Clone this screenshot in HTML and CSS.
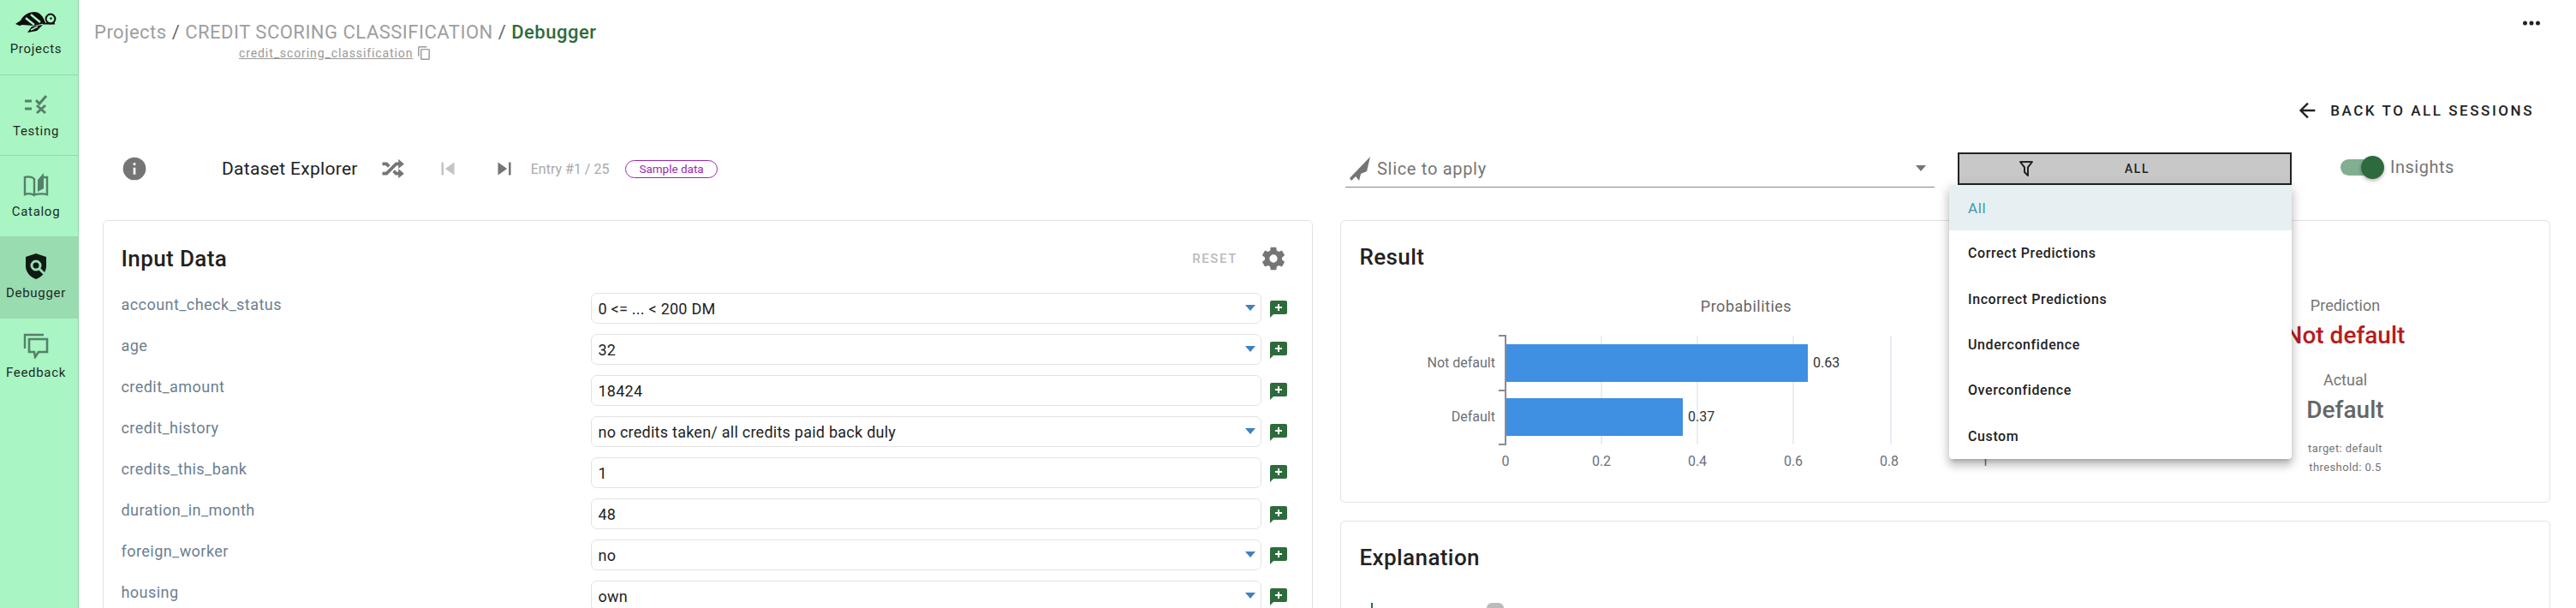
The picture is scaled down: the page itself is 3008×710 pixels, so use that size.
FILE: index.html
```html
<!DOCTYPE html>
<html lang="en">
<head>
  <meta charset="UTF-8">
  <title>Debugger</title>
  <link rel="stylesheet" href="styles.css">
</head>
<body>
  <svg class="sprite" width="0" height="0">
    <symbol id="add" viewBox="0 0 24 24"><path d="M20,2H4A2,2 0 0,0 2,4V22L6,18H20A2,2 0 0,0 22,16V4A2,2 0 0,0 20,2M11,6H13V9H16V11H13V14H11V11H8V9H11V6Z"/></symbol>
    <symbol id="caret" viewBox="0 0 12 7"><path d="M0,0H12L6,7Z"/></symbol>
  </svg>

  <nav class="sidebar">
    <a class="nav-item nav-first">
      <svg class="nav-icon" width="48" height="30" viewBox="0 0 48 30">
        <path d="M0,17L6,13C9,7 15,3 22,3C29,3 33,9 35,16L22,19L8,18L5,19Z" fill="#0d0d0d"/>
        <path d="M12,10L22,18M18,6L29,15" stroke="#a9f5c3" stroke-width="2.4"/>
        <circle cx="41" cy="11" r="5.4" fill="none" stroke="#0d0d0d" stroke-width="2"/>
        <circle cx="41.5" cy="10.5" r="1.2" fill="#0d0d0d"/>
        <path d="M32,16.5H46" stroke="#0d0d0d" stroke-width="2"/>
        <path d="M14,27L19,20L32,18L25,25Z" fill="#0d0d0d"/>
        <path d="M18,24L26,20" stroke="#a9f5c3" stroke-width="1.4"/>
      </svg>
      <span>Projects</span>
    </a>
    <a class="nav-item">
      <svg class="nav-icon" width="30" height="30" viewBox="0 0 30 30">
        <path d="M2,11H10M2,20H10" stroke="#55806a" stroke-width="3"/>
        <path d="M15,10L19,14L27,5M16,16L26,25M26,16L16,25" fill="none" stroke="#55806a" stroke-width="3"/>
      </svg>
      <span>Testing</span>
    </a>
    <a class="nav-item">
      <svg class="nav-icon" width="30" height="30" viewBox="0 0 30 30">
        <path d="M13,27V8C10,5 5,5 2,6V26C5,25 10,25 13,27C15,25 25,25 28,26V6H24" fill="none" stroke="#55806a" stroke-width="2.4"/>
        <path d="M17,23V9L24,1V19Z" fill="#55806a"/>
      </svg>
      <span>Catalog</span>
    </a>
    <a class="nav-item active">
      <svg class="nav-icon" width="30" height="30" viewBox="0 0 30 30">
        <path d="M15,0L27,4V15C27,22 21,28 15,30C9,28 3,22 3,15V4Z" fill="#101a14"/>
        <circle cx="15" cy="14" r="5" fill="none" stroke="#98dcb0" stroke-width="3"/>
        <path d="M19,18L25,24" stroke="#98dcb0" stroke-width="3"/>
      </svg>
      <span>Debugger</span>
    </a>
    <a class="nav-item">
      <svg class="nav-icon" width="30" height="30" viewBox="0 0 30 30">
        <path d="M24,2H2V18" fill="none" stroke="#55806a" stroke-width="2.4"/>
        <path d="M7,7H28V22H18L14,28L13,22H7Z" fill="none" stroke="#55806a" stroke-width="2.6"/>
      </svg>
      <span>Feedback</span>
    </a>
  </nav>

  <main class="main">
    <header class="top">
      <div class="crumbs">
        <div class="crumb-line">
          <span class="crumb">Projects</span> / <span class="crumb">CREDIT SCORING CLASSIFICATION</span> / <span class="crumb-now">Debugger</span>
        </div>
        <div class="crumb-sub">
          <span class="crumb-key">credit_scoring_classification</span>
          <svg width="14" height="16" viewBox="2 1 19 22" fill="#999"><path d="M19,21H8V7H19M19,5H8A2,2 0 0,0 6,7V21A2,2 0 0,0 8,23H19A2,2 0 0,0 21,21V7A2,2 0 0,0 19,5M16,1H4A2,2 0 0,0 2,3V17H4V3H16V1Z"/></svg>
        </div>
      </div>
      <svg class="dots" width="30" height="30" viewBox="0 0 24 24" fill="#222"><path d="M16,12A2,2 0 0,1 18,10A2,2 0 0,1 20,12A2,2 0 0,1 18,14A2,2 0 0,1 16,12M10,12A2,2 0 0,1 12,10A2,2 0 0,1 14,12A2,2 0 0,1 12,14A2,2 0 0,1 10,12M4,12A2,2 0 0,1 6,10A2,2 0 0,1 8,12A2,2 0 0,1 6,14A2,2 0 0,1 4,12Z"/></svg>
    </header>

    <div class="back-row">
      <svg width="28" height="28" viewBox="0 0 24 24" fill="#222"><path d="M20,11V13H8L13.5,18.5L12.08,19.92L4.16,12L12.08,4.08L13.5,5.5L8,11H20Z"/></svg>
      <span class="back-label">BACK TO ALL SESSIONS</span>
    </div>

    <section class="columns">
      <div class="toolbar">
        <svg class="info-icon" width="32" height="32" viewBox="0 0 24 24" fill="#757575"><path d="M13,9H11V7H13M13,17H11V11H13M12,2A10,10 0 0,0 2,12A10,10 0 0,0 12,22A10,10 0 0,0 22,12A10,10 0 0,0 12,2Z"/></svg>
        <span class="explorer">Dataset Explorer</span>
        <svg class="shuffle" width="30" height="30" viewBox="0 0 24 24" fill="#757575"><path d="M17,3L22.25,7.5L17,12L22.25,16.5L17,21V18H14.26L11.44,15.18L13.56,13.06L15.5,15H17V12L17,9H15.5L6.5,18H2V15H5.26L14.26,6H17V3M2,6H6.5L9.32,8.82L7.2,10.94L5.26,9H2V6Z"/></svg>
        <svg class="prev" width="30" height="30" viewBox="0 0 24 24" fill="#c4c4c4"><path d="M6,18V6H8V18H6M9.5,12L18,6V18L9.5,12Z"/></svg>
        <svg class="next" width="30" height="30" viewBox="0 0 24 24" fill="#757575"><path d="M16,18H18V6H16M6,18L14.5,12L6,6V18Z"/></svg>
        <span class="entry">Entry #1 / 25</span>
        <span class="chip">Sample data</span>
      </div>

      <div class="toolbar toolbar-right">
        <div class="slice">
          <svg width="26" height="28" viewBox="0 0 26 28" fill="#757575"><path d="M25,0L21,17L14,20L12,28L8,23L3,28L1,25Z"/></svg>
          <span class="slice-label">Slice to apply</span>
          <svg class="slice-caret" width="12" height="7"><use href="#caret"/></svg>
        </div>
        <div class="filter">
          <button class="filter-btn">
            <svg class="filter-icon" width="24" height="24" viewBox="0 0 24 24" fill="#222"><path d="M15,19.88C15.04,20.18 14.94,20.5 14.71,20.71C14.32,21.1 13.69,21.1 13.3,20.71L9.29,16.7C9.06,16.47 8.96,16.16 9,15.87V10.75L4.21,4.62C3.87,4.19 3.95,3.56 4.38,3.22C4.57,3.08 4.78,3 5,3V3H19V3C19.22,3 19.43,3.08 19.62,3.22C20.05,3.56 20.13,4.19 19.79,4.62L15,10.75V19.88M7.04,5L11,10.06V15.58L13,17.58V10.05L16.96,5H7.04Z"/></svg>
            <span class="filter-label">ALL</span>
          </button>
          <ul class="menu">
            <li class="menu-item selected">All</li>
            <li class="menu-item">Correct Predictions</li>
            <li class="menu-item">Incorrect Predictions</li>
            <li class="menu-item">Underconfidence</li>
            <li class="menu-item">Overconfidence</li>
            <li class="menu-item">Custom</li>
          </ul>
        </div>
        <div class="switch">
          <span class="switch-track"></span>
          <span class="switch-thumb"></span>
        </div>
        <span class="switch-label">Insights</span>
      </div>

      <div class="card">
        <div class="card-head">
          <h2 class="card-title">Input Data</h2>
          <span class="reset">RESET</span>
          <svg class="gear" width="32" height="32" viewBox="0 0 24 24" fill="#757575"><path d="M12,15.5A3.5,3.5 0 0,1 8.5,12A3.5,3.5 0 0,1 12,8.5A3.5,3.5 0 0,1 15.5,12A3.5,3.5 0 0,1 12,15.5M19.43,12.97C19.47,12.65 19.5,12.33 19.5,12C19.5,11.67 19.47,11.34 19.43,11L21.54,9.37C21.73,9.22 21.78,8.95 21.66,8.73L19.66,5.27C19.54,5.05 19.27,4.96 19.05,5.05L16.56,6.05C16.04,5.66 15.5,5.32 14.87,5.07L14.5,2.42C14.46,2.18 14.25,2 14,2H10C9.75,2 9.54,2.18 9.5,2.42L9.13,5.07C8.5,5.32 7.96,5.66 7.44,6.05L4.95,5.05C4.73,4.96 4.46,5.05 4.34,5.27L2.34,8.73C2.21,8.95 2.27,9.22 2.46,9.37L4.57,11C4.53,11.34 4.5,11.67 4.5,12C4.5,12.33 4.53,12.65 4.57,12.97L2.46,14.63C2.27,14.78 2.21,15.05 2.34,15.27L4.34,18.73C4.46,18.95 4.73,19.03 4.95,18.95L7.44,17.94C7.96,18.34 8.5,18.68 9.13,18.93L9.5,21.58C9.54,21.82 9.75,22 10,22H14C14.25,22 14.46,21.82 14.5,21.58L14.87,18.93C15.5,18.67 16.04,18.34 16.56,17.94L19.05,18.95C19.27,19.03 19.54,18.95 19.66,18.73L21.66,15.27C21.78,15.05 21.73,14.78 21.54,14.63L19.43,12.97Z"/></svg>
        </div>
        <div class="rows">
          <div class="row">
            <label class="row-label">account_check_status</label>
            <div class="field"><span>0 &lt;= ... &lt; 200 DM</span><svg class="field-caret" width="12" height="7"><use href="#caret"/></svg></div>
            <svg class="add" width="24" height="24"><use href="#add"/></svg>
          </div>
          <div class="row">
            <label class="row-label">age</label>
            <div class="field"><span>32</span><svg class="field-caret" width="12" height="7"><use href="#caret"/></svg></div>
            <svg class="add" width="24" height="24"><use href="#add"/></svg>
          </div>
          <div class="row">
            <label class="row-label">credit_amount</label>
            <div class="field"><span>18424</span></div>
            <svg class="add" width="24" height="24"><use href="#add"/></svg>
          </div>
          <div class="row">
            <label class="row-label">credit_history</label>
            <div class="field"><span>no credits taken/ all credits paid back duly</span><svg class="field-caret" width="12" height="7"><use href="#caret"/></svg></div>
            <svg class="add" width="24" height="24"><use href="#add"/></svg>
          </div>
          <div class="row">
            <label class="row-label">credits_this_bank</label>
            <div class="field"><span>1</span></div>
            <svg class="add" width="24" height="24"><use href="#add"/></svg>
          </div>
          <div class="row">
            <label class="row-label">duration_in_month</label>
            <div class="field"><span>48</span></div>
            <svg class="add" width="24" height="24"><use href="#add"/></svg>
          </div>
          <div class="row">
            <label class="row-label">foreign_worker</label>
            <div class="field"><span>no</span><svg class="field-caret" width="12" height="7"><use href="#caret"/></svg></div>
            <svg class="add" width="24" height="24"><use href="#add"/></svg>
          </div>
          <div class="row">
            <label class="row-label">housing</label>
            <div class="field"><span>own</span><svg class="field-caret" width="12" height="7"><use href="#caret"/></svg></div>
            <svg class="add" width="24" height="24"><use href="#add"/></svg>
          </div>
        </div>
      </div>

      <div class="side-cards">
        <div class="card card-result">
          <h2 class="card-title">Result</h2>
          <div class="result-body">
            <svg class="chart" width="760" height="220" viewBox="0 0 760 220">
              <g stroke="#e3e8f2" stroke-width="1.5">
                <path d="M270,51V178M382,51V178M494,51V178M608,51V178M718,51V178"/>
              </g>
              <rect x="158" y="61" width="353" height="44" fill="#3f8fe2"/>
              <rect x="158" y="124" width="207" height="44" fill="#3f8fe2"/>
              <path d="M150,51H158V178H150M150,115H158" fill="none" stroke="#8a8a94" stroke-width="2"/>
              <text class="chart-title" x="439" y="23">Probabilities</text>
              <text class="chart-cat" x="146" y="88">Not default</text>
              <text class="chart-cat" x="146" y="151">Default</text>
              <text class="chart-val" x="517" y="88">0.63</text>
              <text class="chart-val" x="371" y="151">0.37</text>
              <text class="chart-tick" x="158" y="203">0</text>
              <text class="chart-tick" x="270" y="203">0.2</text>
              <text class="chart-tick" x="382" y="203">0.4</text>
              <text class="chart-tick" x="494" y="203">0.6</text>
              <text class="chart-tick" x="606" y="203">0.8</text>
              <text class="chart-tick" x="718" y="203">1</text>
            </svg>
            <div class="outcome">
              <div class="outcome-label">Prediction</div>
              <div class="outcome-value wrong">Not default</div>
              <div class="outcome-label outcome-next">Actual</div>
              <div class="outcome-value">Default</div>
              <div class="outcome-note outcome-first">target: default</div>
              <div class="outcome-note">threshold: 0.5</div>
            </div>
          </div>
        </div>
        <div class="card card-explain">
          <h2 class="card-title">Explanation</h2>
          <div class="explain-row">
            <span class="explain-mark"></span>
            <span class="explain-blob"></span>
          </div>
        </div>
      </div>
    </section>
  </main>
</body>
</html>
```

FILE: styles.css
```css
* {
  box-sizing: border-box;
}
html, body {
  height: 710px;
  margin: 0;
  overflow: hidden;
}
body {
  display: flex;
  background-color: white;
  color: #222;
  font-family: Roboto, sans-serif;
}
.sprite {
  position: absolute;
}

/* sidebar */
.sidebar {
  flex: none;
  width: 92px;
  height: 710px;
  background-color: #a9f5c3;
  border-right: 1px solid #8fd8aa;
}
.nav-item {
  position: relative;
  display: flex;
  flex-direction: column;
  align-items: center;
  justify-content: center;
  gap: 7px;
  width: 84px;
  height: 94px;
  padding-bottom: 2px;
  color: #1f2a24;
  font-size: 15px;
  letter-spacing: .7px;
}
.nav-item::after {
  content: '';
  position: absolute;
  left: 0;
  bottom: 0;
  width: 91px;
  height: 1px;
  background-color: #8fd8aa;
}
.nav-first {
  height: 88px;
  padding-bottom: 11px;
}
.nav-item.active::before {
  content: '';
  position: absolute;
  left: 0;
  top: 0;
  width: 91px;
  height: 100%;
  background-color: #98dcb0;
}
.nav-item.active {
  height: 96px;
}
.nav-item:nth-child(3)::after,
.nav-item.active::after,
.nav-item:last-child::after {
  display: none;
}
.nav-item > * {
  position: relative;
  z-index: 1;
}
.nav-item:last-child {
  padding-bottom: 6px;
}
.nav-icon {
  flex: none;
}

/* main */
.main {
  flex: 1;
  min-width: 0;
  padding: 0 30px 0 28px;
}
.top {
  display: flex;
  justify-content: space-between;
  height: 112px;
}
.crumbs {
  padding-top: 24px;
  margin-left: -10px;
}
.crumb-line {
  font-size: 22px;
  line-height: 28px;
  letter-spacing: .5px;
  color: #666;
}
.crumb {
  color: #9e9e9e;
}
.crumb-now {
  color: #2e6b3c;
  font-weight: 500;
}
.crumb-sub {
  display: flex;
  align-items: center;
  gap: 6px;
  margin: 1px 0 0 169px;
  height: 18px;
  font-size: 14px;
  color: #999;
}
.crumb-key {
  text-decoration: underline;
  letter-spacing: .9px;
}
.dots {
  margin: 12px 7px 0 0;
}
.back-row {
  display: flex;
  justify-content: flex-end;
  align-items: center;
  gap: 13px;
  height: 34px;
  margin-bottom: 21px;
  padding-right: 19px;
}
.back-label {
  font-size: 17px;
  font-weight: 500;
  letter-spacing: 2.55px;
}

.columns {
  display: grid;
  grid-template-columns: 1fr 1fr;
  column-gap: 32px;
  row-gap: 30px;
  align-items: start;
}
.toolbar {
  display: flex;
  align-items: center;
  height: 60px;
  padding-left: 21px;
}
.info-icon {
  margin-right: 86px;
}
.explorer {
  font-size: 21px;
  letter-spacing: .3px;
  margin-right: 26px;
}
.prev {
  margin-left: 34px;
}
.next {
  margin-left: 36px;
}
.entry {
  margin-left: 16px;
  font-size: 16px;
  color: #aaa;
}
.chip {
  margin-left: 19px;
  height: 21px;
  padding: 0 15px;
  border: 1.5px solid #9c27b0;
  border-radius: 11px;
  color: #9c27b0;
  font-size: 13.5px;
  line-height: 18px;
}

.toolbar-right {
  padding-left: 6px;
}
.slice {
  display: flex;
  align-items: center;
  width: 688px;
  height: 44px;
  padding: 0 10px 0 4px;
  border-bottom: 1.5px solid #888;
  color: #757575;
}
.slice-label {
  flex: 1;
  margin-left: 7px;
  font-size: 20px;
  letter-spacing: .7px;
}
.slice-caret {
  fill: #757575;
}
.filter {
  position: relative;
  width: 390px;
  margin-left: 27px;
}
.filter-btn {
  display: block;
  position: relative;
  width: 100%;
  height: 38px;
  padding: 0;
  background-color: #c8c8c8;
  border: 2px solid #222;
  color: #222;
  font-family: Roboto, sans-serif;
  font-size: 14px;
  font-weight: 500;
  letter-spacing: 1.6px;
}
.filter-icon {
  position: absolute;
  left: 66px;
  top: 5px;
}
.filter-label {
  display: block;
  padding-left: 29px;
  text-align: center;
}
.menu {
  position: absolute;
  top: 100%;
  right: 0;
  z-index: 5;
  width: 400px;
  margin: 0;
  padding: 0;
  list-style: none;
  background-color: white;
  border-radius: 4px;
  box-shadow: 0 5px 5px -3px rgba(0,0,0,.2), 0 8px 10px 1px rgba(0,0,0,.14), 0 3px 14px 2px rgba(0,0,0,.12);
}
.menu-item {
  display: flex;
  align-items: center;
  height: 53.33px;
  padding-left: 22px;
  font-size: 16px;
  font-weight: 500;
  letter-spacing: .6px;
}
.menu-item.selected {
  background-color: #e6f0f2;
  color: #3f9aae;
  font-size: 17px;
  font-weight: 400;
}
.switch {
  position: relative;
  width: 51px;
  height: 27px;
  margin: 0 0 3px 57px;
}
.switch-track {
  position: absolute;
  left: 0;
  top: 4px;
  width: 44px;
  height: 19px;
  border-radius: 10px;
  background-color: #82ae91;
}
.switch-thumb {
  position: absolute;
  right: 0;
  top: 0;
  width: 27px;
  height: 27px;
  border-radius: 50%;
  background-color: #2e6b3c;
  box-shadow: 0 2px 4px rgba(0,0,0,.3);
}
.switch-label {
  margin: 0 0 5px 7px;
  font-size: 20px;
  letter-spacing: .5px;
  color: #757575;
}

/* cards */
.card {
  padding: 26px 21px 25px 20.5px;
  border: 1.5px solid #e2e2e2;
  border-radius: 6px;
  background-color: white;
}
.card-title {
  margin: 0;
  font-size: 26px;
  font-weight: 500;
  line-height: 32px;
  letter-spacing: .4px;
  color: #222;
}
.side-cards .card-title {
  margin-left: 1px;
}
.card-head {
  display: flex;
  align-items: center;
  margin-top: 2px;
}
.card-head .card-title {
  flex: 1;
}
.reset {
  font-size: 15px;
  font-weight: 500;
  letter-spacing: 1.6px;
  color: #bbb;
  margin-right: 26px;
}
.gear {
  margin-right: 8px;
}
.rows {
  margin-top: 24px;
}
.row {
  display: flex;
  align-items: flex-start;
  height: 48px;
}
.row-label {
  flex: none;
  width: 548px;
  padding-top: 2px;
  font-size: 18px;
  line-height: 24px;
  letter-spacing: .45px;
  color: #6b8090;
}
.field {
  display: flex;
  align-items: center;
  justify-content: space-between;
  width: 783px;
  height: 36px;
  padding: 0 6px 0 8px;
  border: 1.5px solid #e2e2e2;
  border-radius: 7px;
  font-size: 18px;
  letter-spacing: .25px;
}
.field-caret {
  fill: #3d82bd;
  margin-bottom: 2px;
}
.add {
  flex: none;
  margin: 7px 0 0 8px;
  fill: #2e6b3c;
}

.side-cards {
  display: flex;
  flex-direction: column;
  gap: 21px;
}
.result-body {
  display: flex;
  margin: 25px 0 0 13px;
}
.chart {
  flex: none;
}
.chart text {
  font-family: Roboto, sans-serif;
  font-size: 16px;
}
.chart .chart-title {
  fill: #666;
  text-anchor: middle;
  font-size: 18px;
  letter-spacing: .5px;
}
.chart-cat {
  fill: #6e7079;
  text-anchor: end;
}
.chart-val {
  fill: #333;
}
.chart-tick {
  fill: #6e7079;
  text-anchor: middle;
}
.outcome {
  flex: none;
  width: 300px;
  margin-left: 229px;
  padding-top: 4px;
  text-align: center;
}
.outcome-label {
  font-size: 18px;
  line-height: 24px;
  color: #757575;
}
.outcome-next {
  margin-top: 22px;
}
.outcome-value {
  margin-top: 5px;
  font-size: 28px;
  font-weight: 500;
  line-height: 36px;
  color: #666;
}
.outcome-value + .outcome-first {
  margin-top: 16px;
}
.outcome-value.wrong {
  color: #b71c1c;
}
.outcome-note {
  font-size: 13px;
  line-height: 22px;
  letter-spacing: .4px;
  color: #757575;
}
.explain-row {
  display: flex;
  align-items: flex-start;
  gap: 133px;
  margin: 37px 0 0 14px;
}
.explain-mark {
  width: 2px;
  height: 20px;
  background-color: #2e6b3c;
}
.explain-blob {
  width: 20px;
  height: 20px;
  border-radius: 6px;
  background-color: #bbb;
}
```
